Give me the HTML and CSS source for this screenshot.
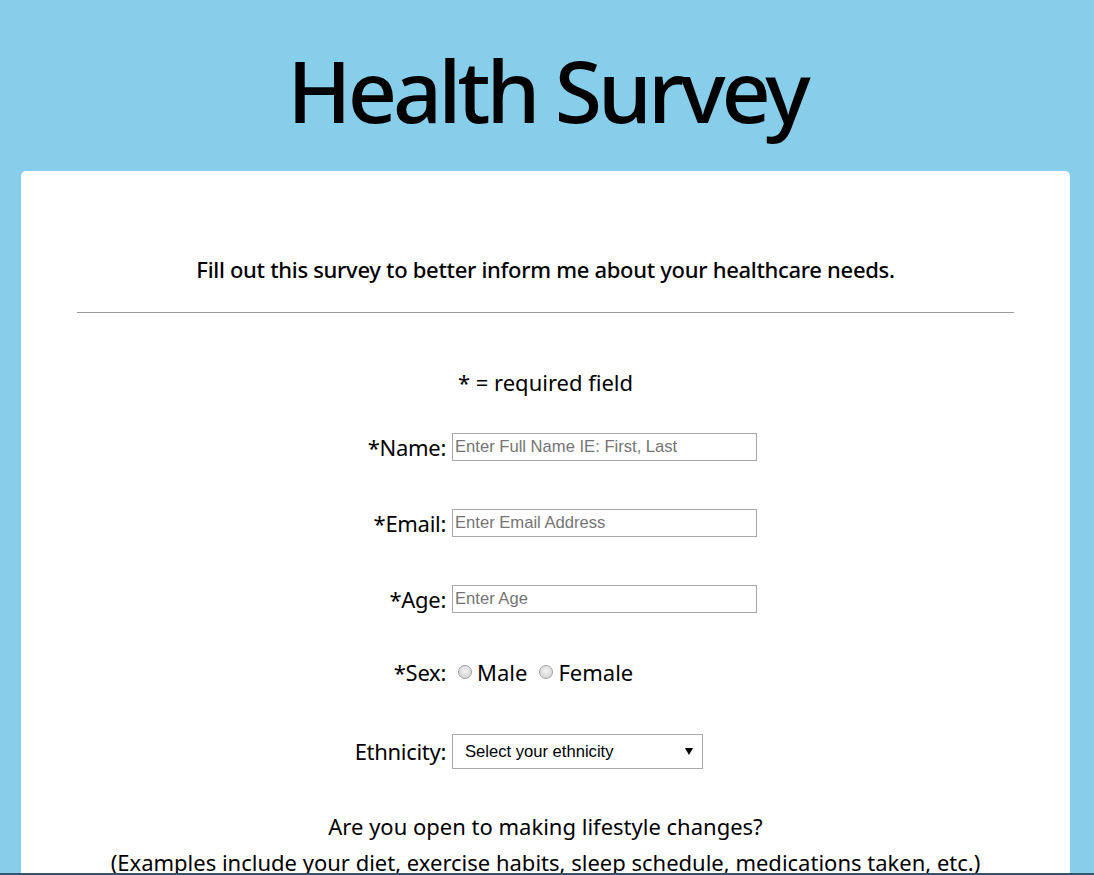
FILE: index.html
```html
<!DOCTYPE html>
<html lang="en">
<head>
<meta charset="utf-8">
<title>Health Survey</title>
<link rel="stylesheet" href="styles.css">
</head>
<body>
<header class="page-header">
  <h1 class="title">Health Survey</h1>
</header>
<main class="card">
  <p class="intro">Fill out this survey to better inform me about your healthcare needs.</p>
  <hr class="divider">
  <form class="survey">
    <p class="note">* = required field</p>
    <div class="row">
      <label class="label" for="name">*Name:</label>
      <input class="field" id="name" type="text" placeholder="Enter Full Name IE: First, Last">
    </div>
    <div class="row">
      <label class="label" for="email">*Email:</label>
      <input class="field" id="email" type="email" placeholder="Enter Email Address">
    </div>
    <div class="row row-age">
      <label class="label" for="age">*Age:</label>
      <input class="field" id="age" type="text" placeholder="Enter Age">
    </div>
    <div class="row">
      <span class="label">*Sex:</span>
      <div class="radios">
        <label class="radio"><input type="radio" name="sex" class="radio-input"> Male</label>
        <label class="radio"><input type="radio" name="sex" class="radio-input"> Female</label>
      </div>
    </div>
    <div class="row row-select">
      <label class="label" for="eth">Ethnicity:</label>
      <select class="select" id="eth">
        <option>Select your ethnicity</option>
      </select>
    </div>
    <p class="question">Are you open to making lifestyle changes?</p>
    <p class="examples">(Examples include your diet, exercise habits, sleep schedule, medications taken, etc.)</p>
  </form>
</main>
<div class="bottom-line"></div>
</body>
</html>
```

FILE: styles.css
```css
html, body {
  margin: 0;
  padding: 0;
}
body {
  background: #87ceeb;
  font-family: "Noto Sans", "Open Sans", sans-serif;
  color: #000;
  height: 875px;
  overflow: hidden;
}
.page-header {
  padding-top: 40px;
  height: 171px;
  box-sizing: border-box;
  text-align: center;
}
.title {
  margin: 0;
  font-size: 86px;
  font-weight: 500;
  line-height: 100px;
  letter-spacing: -4px;
}
.card {
  background: #fff;
  margin: 0 24px 0 21px;
  border-radius: 5px 5px 0 0;
  padding-top: 80px;
  height: 704px;
  box-sizing: border-box;
  overflow: hidden;
}
.intro {
  margin: 0;
  text-align: center;
  font-size: 22px;
  font-weight: 500;
  line-height: 36px;
  letter-spacing: -0.3px;
}
.divider {
  margin: 25px 56px 0;
  border: 0;
  border-top: 1px solid #9a9a9a;
  height: 0;
}
.survey {
  display: flex;
  flex-direction: column;
  padding-top: 54px;
}
.note {
  margin: 0 0 35px;
  text-align: center;
  font-size: 22px;
  line-height: 30px;
}
.row {
  display: flex;
  align-items: center;
  gap: 6px;
  height: 30px;
  margin-bottom: 46px;
}
.row-age {
  margin-bottom: 43px;
}
.row-select {
  height: 36px;
  margin-bottom: 39px;
}
.label {
  width: 425px;
  text-align: right;
  font-size: 22px;
  line-height: 30px;
  flex: none;
  letter-spacing: -0.3px;
}
.field {
  width: 305px;
  height: 28px;
  box-sizing: border-box;
  border: 1px solid #a9a9a9;
  padding: 1px 2px;
  font-family: "Liberation Sans", Arial, sans-serif;
  font-size: 16.6px;
  color: #000;
  margin: 0;
  outline: none;
}
.field::placeholder {
  color: #757575;
}
.radios {
  display: flex;
  align-items: center;
  gap: 6px;
}
.radio {
  display: flex;
  align-items: center;
  gap: 5px;
  font-size: 22px;
  line-height: 30px;
}
.radio-input {
  appearance: none;
  -webkit-appearance: none;
  width: 14px;
  height: 14px;
  margin: 0 0 0 6px;
  border-radius: 50%;
  border: 1px solid #a0a0a0;
  background: radial-gradient(circle at 50% 40%, #f2f2f2 0%, #d9d9d9 70%, #c8c8c8 100%);
  box-sizing: border-box;
}
.select {
  appearance: none;
  -webkit-appearance: none;
  width: 251px;
  height: 35px;
  box-sizing: border-box;
  border: 1px solid #a9a9a9;
  border-radius: 0;
  background: #fff url("data:image/svg+xml;utf8,<svg xmlns='http://www.w3.org/2000/svg' width='8' height='7'><path d='M0 0h8L4 7z' fill='black'/></svg>") no-repeat right 9px center;
  padding: 0 12px;
  font-family: "Liberation Sans", Arial, sans-serif;
  font-size: 16.6px;
  color: #000;
  margin: 0;
}
.question {
  margin: 0;
  text-align: center;
  font-size: 22px;
  line-height: 36px;
}
.examples {
  margin: 0;
  text-align: center;
  font-size: 22px;
  line-height: 36px;
}
.bottom-line {
  position: fixed;
  left: 0;
  right: 0;
  bottom: 0;
  height: 2px;
  background: #34526e;
}
```
